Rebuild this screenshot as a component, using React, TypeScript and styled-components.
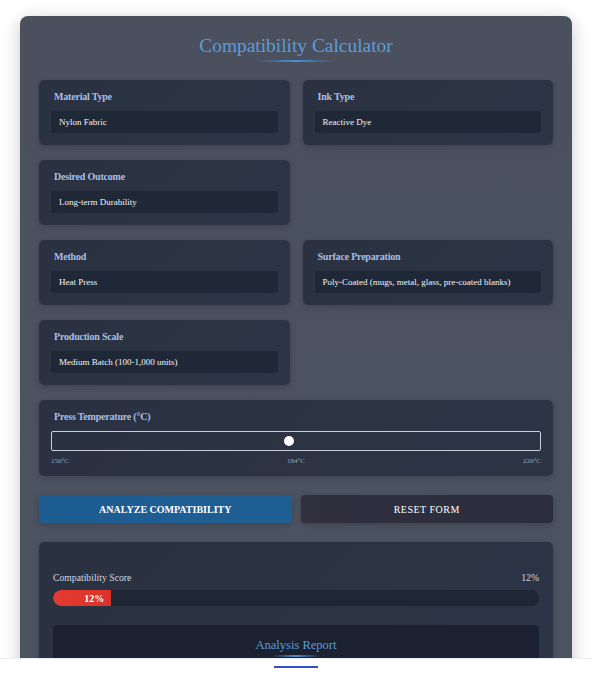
import * as React from 'react';
import styled, { createGlobalStyle } from 'styled-components';

const GlobalStyle = createGlobalStyle`
  html, body {
    margin: 0;
    padding: 0;
    background: #ffffff;
    font-family: "Liberation Serif", "Times New Roman", serif;
  }
`;

const Page = styled.div`
  padding: 16px 20px 40px 20px;
`;

const Calculator = styled.div`
  background: linear-gradient(180deg, #4a505d 0%, #4c5462 100%);
  border-radius: 8px;
  padding: 18px 19px 30px 19px;
  box-shadow: 0 4px 18px rgba(0, 0, 0, 0.22);
`;

const Title = styled.h1`
  margin: 0;
  text-align: center;
  font-size: 19.4px;
  line-height: 24px;
  font-weight: normal;
  color: #5b9cdc;
`;

const TitleLine = styled.div<{ $width: number }>`
  width: ${p => p.$width}px;
  height: 2px;
  margin: 2px auto 0 auto;
  background: linear-gradient(90deg, rgba(74, 144, 217, 0) 0%, #4a90d9 50%, rgba(74, 144, 217, 0) 100%);
`;

const FieldGrid = styled.div`
  display: grid;
  grid-template-columns: 1fr 1fr;
  column-gap: 13px;
  row-gap: 15px;
  margin-top: 18px;
`;

const Panel = styled.div`
  background: linear-gradient(135deg, #2a3241 0%, #2c3545 100%);
  border-radius: 5px;
  padding: 10px 12px 12px 12px;
  box-shadow: 0 2px 6px rgba(0, 0, 0, 0.18);
`;

const FieldLabel = styled.div`
  font-size: 10px;
  line-height: 14px;
  font-weight: bold;
  letter-spacing: -0.2px;
  color: #a7bfe8;
  padding-left: 3px;
  margin-bottom: 7px;
`;

const SelectBox = styled.div`
  height: 22px;
  line-height: 22px;
  background: #1f2837;
  border-radius: 3px;
  padding-left: 8px;
  font-size: 9px;
  color: #f2f4f8;
  white-space: nowrap;
  overflow: hidden;
`;

const SliderPanel = styled(Panel)`
  margin-top: 15px;
  padding-bottom: 10px;
`;

const Range = styled.input`
  -webkit-appearance: none;
  appearance: none;
  display: block;
  width: 100%;
  box-sizing: border-box;
  height: 20px;
  margin: 0;
  background: transparent;
  border: 1px solid #c9ced8;
  border-radius: 2px;
  &::-webkit-slider-thumb {
    -webkit-appearance: none;
    width: 10px;
    height: 10px;
    border-radius: 50%;
    background: #ffffff;
  }
`;

const Ticks = styled.div`
  display: flex;
  justify-content: space-between;
  margin-top: 5px;
  font-size: 7px;
  line-height: 10px;
  color: #9ea5b2;
`;

const ButtonRow = styled.div`
  display: grid;
  grid-template-columns: 1fr 1fr;
  column-gap: 9px;
  margin-top: 19px;
`;

const ActionButton = styled.button<{ $primary?: boolean }>`
  height: 28px;
  border: none;
  border-radius: 4px;
  font-family: "Liberation Serif", "Times New Roman", serif;
  font-size: 10px;
  font-weight: ${p => (p.$primary ? 'bold' : 'normal')};
  letter-spacing: ${p => (p.$primary ? '0' : '0.5px')};
  text-transform: uppercase;
  color: #ffffff;
  background: ${p =>
    p.$primary
      ? 'linear-gradient(90deg, #1d5d91 0%, #1f5e92 100%)'
      : 'linear-gradient(90deg, #30303f 0%, #2b2d3c 100%)'};
  box-shadow: 0 2px 6px rgba(0, 0, 0, 0.2);
  cursor: pointer;
`;

const ResultPanel = styled(Panel)`
  margin-top: 19px;
  padding: 30px 14px 0 14px;
`;

const ScoreRow = styled.div`
  display: flex;
  justify-content: space-between;
  font-size: 9.7px;
  line-height: 12px;
  color: #cfd6e4;
`;

const Bar = styled.div`
  margin-top: 6px;
  height: 16px;
  border-radius: 8px;
  background: #1f2735;
  overflow: hidden;
`;

const BarFill = styled.div`
  height: 100%;
  background: linear-gradient(90deg, #e53b30 0%, #d8332b 100%);
  border-radius: 8px 0 0 8px;
  display: flex;
  align-items: center;
  justify-content: flex-end;
  padding-right: 7px;
  box-sizing: border-box;
  font-size: 10px;
  font-weight: bold;
  color: #ffffff;
`;

const Report = styled.div`
  margin-top: 19px;
  background: #1b2130;
  border-radius: 4px;
  padding: 12px 12px 40px 12px;
`;

const ReportTitle = styled.h2`
  margin: 0;
  text-align: center;
  font-size: 12.5px;
  line-height: 16px;
  font-weight: normal;
  color: #5b9cdc;
`;

const BottomBar = styled.div`
  position: fixed;
  left: 0;
  right: 0;
  bottom: 0;
  height: 16px;
  background: #ffffff;
  border-top: 1px solid #eceef2;
  display: flex;
  justify-content: center;
`;

const Indicator = styled.div`
  width: 44px;
  height: 2px;
  margin-top: 7px;
  background: #3550c8;
`;

const fields: { label: string; value: string | null }[] = [
  { label: 'Material Type', value: 'Nylon Fabric' },
  { label: 'Ink Type', value: 'Reactive Dye' },
  { label: 'Desired Outcome', value: 'Long-term Durability' },
  { label: '', value: null },
  { label: 'Method', value: 'Heat Press' },
  { label: 'Surface Preparation', value: 'Poly-Coated (mugs, metal, glass, pre-coated blanks)' },
  { label: 'Production Scale', value: 'Medium Batch (100-1,000 units)' },
];

export default function App() {
  const [temp, setTemp] = React.useState(184);
  const score = 12;
  return (
    <Page>
      <GlobalStyle />
      <Calculator>
        <Title>Compatibility Calculator</Title>
        <TitleLine $width={76} />
        <FieldGrid>
          {fields.map((f, i) =>
            f.value === null ? (
              <div key={i} />
            ) : (
              <Panel key={i}>
                <FieldLabel>{f.label}</FieldLabel>
                <SelectBox>{f.value}</SelectBox>
              </Panel>
            )
          )}
        </FieldGrid>
        <SliderPanel>
          <FieldLabel>Press Temperature (°C)</FieldLabel>
          <Range
            type="range"
            min={150}
            max={220}
            value={temp}
            onChange={e => setTemp(Number(e.target.value))}
          />
          <Ticks>
            <span>150°C</span>
            <span>{temp}°C</span>
            <span>220°C</span>
          </Ticks>
        </SliderPanel>
        <ButtonRow>
          <ActionButton $primary>Analyze Compatibility</ActionButton>
          <ActionButton>Reset Form</ActionButton>
        </ButtonRow>
        <ResultPanel>
          <ScoreRow>
            <span>Compatibility Score</span>
            <span>{score}%</span>
          </ScoreRow>
          <Bar>
            <BarFill style={{ width: `${score}%` }}>{score}%</BarFill>
          </Bar>
          <Report>
            <ReportTitle>Analysis Report</ReportTitle>
            <TitleLine $width={48} />
          </Report>
        </ResultPanel>
      </Calculator>
      <BottomBar>
        <Indicator />
      </BottomBar>
    </Page>
  );
}
